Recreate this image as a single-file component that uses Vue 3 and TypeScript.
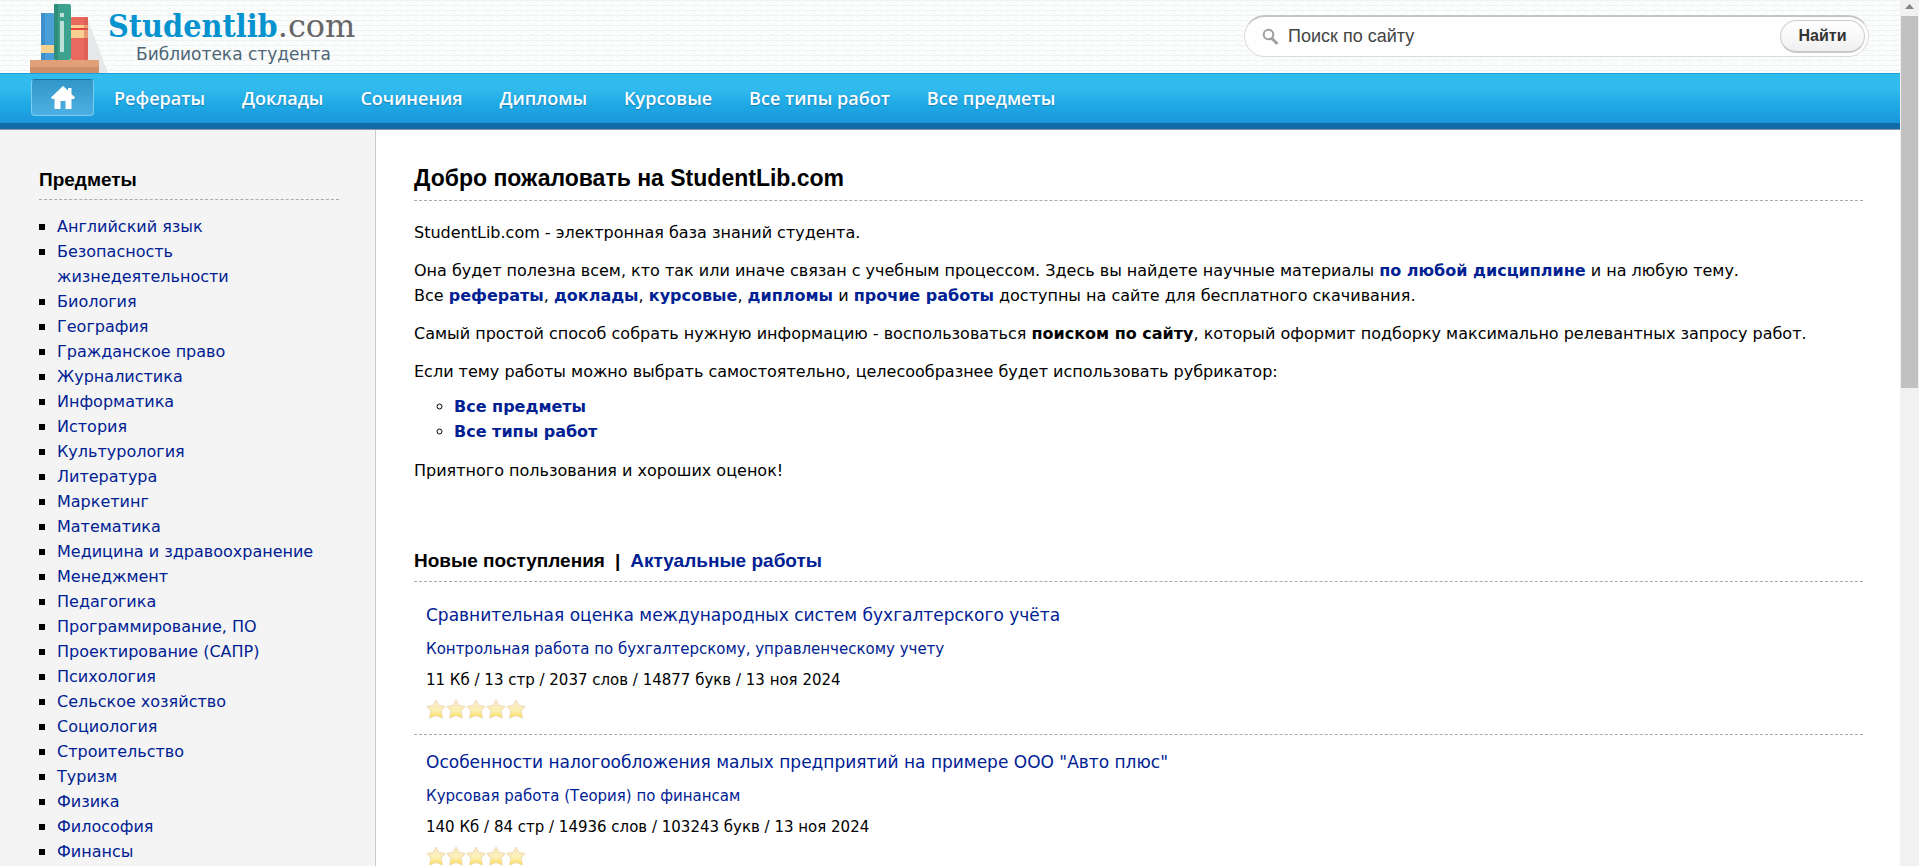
<script setup lang="ts">
interface Work {
  title: string
  kind: string
  meta: string
}

const navItems: string[] = ['Рефераты', 'Доклады', 'Сочинения', 'Дипломы', 'Курсовые', 'Все типы работ', 'Все предметы']

const subjects: string[] = [
  'Английский язык', 'Безопасность жизнедеятельности', 'Биология', 'География', 'Гражданское право',
  'Журналистика', 'Информатика', 'История', 'Культурология', 'Литература', 'Маркетинг', 'Математика',
  'Медицина и здравоохранение', 'Менеджмент', 'Педагогика', 'Программирование, ПО', 'Проектирование (САПР)',
  'Психология', 'Сельское хозяйство', 'Социология', 'Строительство', 'Туризм', 'Физика', 'Философия', 'Финансы',
]

const works: Work[] = [
  {
    title: 'Сравнительная оценка международных систем бухгалтерского учёта',
    kind: 'Контрольная работа по бухгалтерскому, управленческому учету',
    meta: '11 Кб / 13 стр / 2037 слов / 14877 букв / 13 ноя 2024',
  },
  {
    title: 'Особенности налогообложения малых предприятий на примере ООО "Авто плюс"',
    kind: 'Курсовая работа (Теория) по финансам',
    meta: '140 Кб / 84 стр / 14936 слов / 103243 букв / 13 ноя 2024',
  },
]
</script>

<template>
  <div class="window">
    <div class="page">
      <header class="header">
        <svg class="texture" aria-hidden="true">
          <defs>
            <pattern id="weave" width="15" height="5" patternUnits="userSpaceOnUse">
              <path d="M0 .5 H15" stroke="#f1f3f3" />
              <path d="M0 0 L7.500 5 L15 0" fill="none" stroke="#f4f6f6" />
            </pattern>
          </defs>
          <rect width="100%" height="100%" fill="url(#weave)" />
        </svg>
        <a class="logo" href="#">
          <svg class="books" width="78" height="73" viewBox="0 0 78 73" aria-hidden="true">
            <path d="M58 20 L78 73 H58Z" fill="#e6e8e9" />
            <rect x="11" y="13" width="13" height="47" rx="1" fill="#4b9fd9" />
            <rect x="11" y="13" width="4" height="47" fill="#3e8fca" />
            <rect x="11" y="45" width="13" height="8" fill="#f8d08f" />
            <rect x="41" y="17" width="17" height="43" rx="1" fill="#e9695f" />
            <rect x="41" y="25" width="17" height="13" fill="#f9d091" />
            <rect x="41" y="28" width="17" height="2" fill="#e8443c" />
            <rect x="54" y="17" width="4" height="43" fill="#d15850" opacity=".45" />
            <rect x="24" y="4" width="17" height="56" rx="2" fill="#3da28d" />
            <rect x="24" y="4" width="4" height="56" rx="1" fill="#2f8d79" />
            <rect x="30" y="13" width="4" height="4" fill="#bce0d7" />
            <rect x="30" y="21" width="4" height="31" fill="#bce0d7" />
            <rect x="0" y="60" width="69" height="13" fill="#e1a078" />
            <rect x="0" y="67" width="69" height="6" fill="#cf9069" />
          </svg>
          <span class="brand">
            <span class="name"><b>Studentlib</b>.com</span>
            <span class="tagline">Библиотека студента</span>
          </span>
        </a>
        <form class="search" role="search" @submit.prevent>
          <svg width="17" height="17" viewBox="0 0 17 17" aria-hidden="true">
            <circle cx="6.5" cy="6.5" r="4.800" fill="none" stroke="#a0a0a0" stroke-width="2" />
            <path d="M10 10.500 L14.500 15" stroke="#a0a0a0" stroke-width="3" stroke-linecap="round" />
          </svg>
          <input type="text" aria-label="Поиск по сайту" placeholder="Поиск по сайту" />
          <button type="submit">Найти</button>
        </form>
      </header>

      <nav class="nav">
        <a class="home" href="#" aria-label="Главная">
          <svg width="24" height="23" viewBox="0 0 24 23" aria-hidden="true">
            <path d="M12 0 L17 4.500 V2 H20.500 V8 L24 11.500 L23 13 H20.500 V23 H14.500 V15 H9.500 V23 H3.500 V13 H1 L0 11.500Z" fill="#fff" />
          </svg>
        </a>
        <a v-for="item in navItems" :key="item" class="link" href="#">{{ item }}</a>
      </nav>

      <div class="columns">
        <aside class="sidebar">
          <h2>Предметы</h2>
          <ul>
            <li v-for="subject in subjects" :key="subject"><a href="#">{{ subject }}</a></li>
          </ul>
        </aside>

        <main class="content">
          <h1>Добро пожаловать на StudentLib.com</h1>
          <p>StudentLib.com - электронная база знаний студента.</p>
          <p>
            Она будет полезна всем, кто так или иначе связан с учебным процессом. Здесь вы найдете научные материалы
            <a href="#">по любой дисциплине</a> и на любую тему.<br />
            Все <a href="#">рефераты</a>, <a href="#">доклады</a>, <a href="#">курсовые</a>, <a href="#">дипломы</a> и
            <a href="#">прочие работы</a> доступны на сайте для бесплатного скачивания.
          </p>
          <p>
            Самый простой способ собрать нужную информацию - воспользоваться <b>поиском по сайту</b>, который оформит
            подборку максимально релевантных запросу работ.
          </p>
          <p>Если тему работы можно выбрать самостоятельно, целесообразнее будет использовать рубрикатор:</p>
          <ul class="rubrics">
            <li><a href="#">Все предметы</a></li>
            <li><a href="#">Все типы работ</a></li>
          </ul>
          <p>Приятного пользования и хороших оценок!</p>

          <h2 class="tabs"><span>Новые поступления</span><span>|</span><a href="#">Актуальные работы</a></h2>
          <article v-for="work in works" :key="work.title" class="work">
            <h3><a href="#">{{ work.title }}</a></h3>
            <a class="kind" href="#">{{ work.kind }}</a>
            <div class="meta">{{ work.meta }}</div>
            <div class="stars" role="img" aria-label="Рейтинг">
              <svg v-for="n in 5" :key="n" width="20" height="20" viewBox="0 0 20 20" aria-hidden="true">
                <defs>
                  <linearGradient id="gold" x1="0" y1="0" x2="0" y2="1">
                    <stop offset="0" stop-color="#fbeccb" />
                    <stop offset=".6" stop-color="#fbefb4" />
                    <stop offset="1" stop-color="#fbdc4c" />
                  </linearGradient>
                </defs>
                <path d="M10 1 L12.800 6.500 L19 7.500 L15 12 L16.500 19 L10 16.500 L3.500 19 L5 12 L1 7.500 L7.200 6.500Z" fill="url(#gold)" stroke="#efd9b4" stroke-linejoin="round" />
              </svg>
            </div>
          </article>
        </main>
      </div>
    </div>

    <div class="scrollbar" aria-hidden="true">
      <svg width="17" height="16" viewBox="0 0 17 16"><path d="M4 9 L8.500 4 L13 9Z" fill="#858585" /></svg>
      <div class="thumb"></div>
    </div>
  </div>
</template>

<style>
body {
  margin: 0;
}
</style>

<style scoped>
.window {
  display: flex;
  height: 100vh;
  overflow: hidden;
  font: 16px/25px Verdana, "DejaVu Sans", sans-serif;
  color: #000;
  background: #fff;
}
.page {
  flex: 1;
  min-width: 0;
  display: flex;
  flex-direction: column;
}
a {
  color: #002193;
  text-decoration: none;
}
.header {
  position: relative;
  display: flex;
  justify-content: space-between;
  height: 73px;
  padding: 0 31px 0 30px;
  background: #fdfefe;
}
.texture {
  position: absolute;
  inset: 0;
  width: 100%;
  height: 100%;
}
.logo,
.search {
  position: relative;
}
.logo {
  display: flex;
}
.brand {
  display: flex;
  flex-direction: column;
  padding-top: 8px;
}
.name {
  font: 32px/36px "DejaVu Serif", serif;
  color: #666;
}
.name b {
  font-family: "DejaVu Serif Condensed", "DejaVu Serif", serif;
  color: #0593cf;
}
.tagline {
  padding-left: 28px;
  font-size: 17px;
  line-height: 20px;
  color: #4c6575;
}
.search {
  display: flex;
  align-items: center;
  flex: 0 1 625px;
  box-sizing: border-box;
  height: 42px;
  margin-top: 15px;
  padding: 0 3px 0 17px;
  border: 1px solid #dcdcdc;
  border-top: 2px solid #c4c6c6;
  border-radius: 21px;
  background: #fdfefd;
}
.search input {
  flex: 1;
  min-width: 0;
  margin-left: 7px;
  border: 0;
  outline: 0;
  background: transparent;
  font: 18px "Liberation Sans", Arial, sans-serif;
}
.search input::placeholder {
  color: #444;
}
.search button {
  width: 85px;
  height: 33px;
  border: 1px solid #ccc;
  border-bottom: 2px solid #c8c8c8;
  border-radius: 17px;
  background: linear-gradient(#fff, #f0f0f0);
  font: bold 16px "Liberation Sans", Arial, sans-serif;
  color: #333;
}
.nav {
  position: relative;
  display: flex;
  align-items: center;
  flex: none;
  box-sizing: border-box;
  height: 56px;
  padding: 0 31px 2px;
  border-top: 1px solid #1b9fdc;
  border-bottom: 6px solid #116ba6;
  background: linear-gradient(#31bcee, #30baed 30%, #1ea8e4 65%, #1c97dc);
  box-shadow: 0 1px #8f93b3;
  gap: 37px;
}
.home {
  display: flex;
  align-items: center;
  justify-content: center;
  width: 61px;
  height: 35px;
  margin-right: -17px;
  border: 1px solid #7ccdf0;
  border-top-color: #21719f;
  border-radius: 4px;
  background: linear-gradient(#3197c8, #4db0e2);
}
.link {
  font: 600 18px/26px "Open Sans", sans-serif;
  color: #fff;
  text-shadow: 0 1px 1px #1a7db5;
}
.columns {
  display: flex;
  flex: 1;
  min-height: 0;
}
.sidebar {
  flex: none;
  box-sizing: border-box;
  width: 376px;
  padding: 38px 36px 0 39px;
  border-right: 1px solid #ccc;
  background: #f4f4f4;
}
h1,
h2 {
  margin: 0;
  border-bottom: 1px dashed #aaa;
  font-family: "Liberation Sans", Arial, sans-serif;
  font-weight: bold;
}
h2 {
  padding-bottom: 6px;
  font-size: 19px;
  line-height: 26px;
}
.sidebar ul {
  margin: 14px 0 0;
  padding: 0;
  list-style: none;
}
.sidebar li {
  display: flex;
  gap: 12px;
}
.sidebar li::before {
  content: "";
  flex: none;
  width: 6px;
  height: 6px;
  margin-top: 10px;
  background: #000;
}
.content {
  flex: 1;
  min-width: 0;
  padding: 34px 37px 0 38px;
}
h1 {
  padding-bottom: 7px;
  font-size: 23px;
  line-height: 30px;
}
p {
  margin: 0;
}
p + p {
  margin-top: 13px;
}
h1 + p {
  margin-top: 19px;
}
.content p a,
.rubrics a {
  font-weight: bold;
}
.rubrics {
  margin: 10px 0 14px;
  padding-left: 40px;
  list-style: circle;
}
.tabs {
  display: flex;
  gap: 10px;
  margin: 65px 0 6px;
  padding-bottom: 7px;
}
.work {
  padding: 15px 12px;
  border-bottom: 1px dashed #aaa;
}
h3 {
  margin: 0 0 9px;
  font-size: 17px;
  font-weight: normal;
}
.kind,
.meta {
  display: block;
  margin-bottom: 6px;
  font-size: 15px;
}
.stars {
  display: flex;
}
.scrollbar {
  flex: none;
  width: 17px;
  padding: 0 1px;
  background: #f1f1f1;
}
.scrollbar svg {
  display: block;
}
.thumb {
  height: 43vh;
  background: #c1c1c1;
}
</style>
